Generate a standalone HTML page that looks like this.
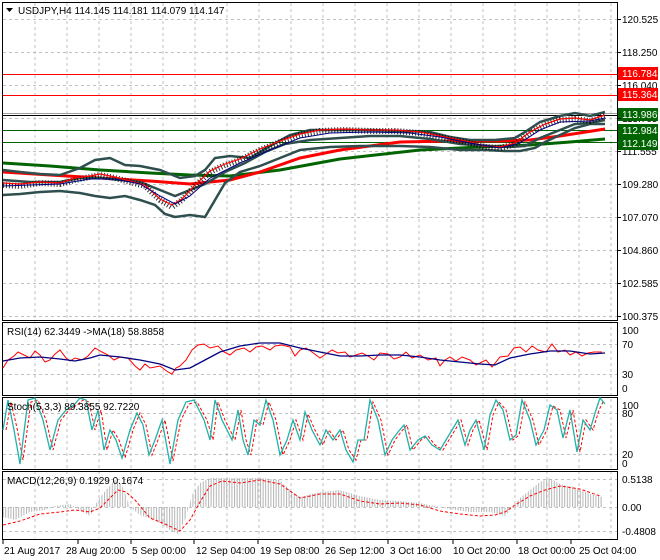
<!DOCTYPE html>
<html><head><meta charset="utf-8"><style>
body{margin:0;background:#fff;}
svg{display:block;font-family:"Liberation Sans",sans-serif;font-size:10px;}
</style></head><body>
<svg width="660" height="560" viewBox="0 0 660 560" xmlns="http://www.w3.org/2000/svg">
<defs>
<pattern id="hist" width="2.6" height="4" patternUnits="userSpaceOnUse"><rect x="0" y="0" width="1" height="4" fill="#b4b4b4"/></pattern>
</defs>
<rect width="660" height="560" fill="#fff"/>
<g stroke="#c0c0c0" stroke-dasharray="3,3" stroke-width="1">
<path d="M35 3V538M67 3V538M99 3V538M131 3V538M163 3V538M195 3V538M227 3V538M259 3V538M291 3V538M323 3V538M355 3V538M387 3V538M419 3V538M451 3V538M483 3V538M515 3V538M547 3V538M579 3V538M611 3V538" />
<path d="M3 19.5H617M3 52.5H617M3 85.5H617M3 118.5H617M3 151.5H617M3 184.5H617M3 217.5H617M3 250.5H617M3 283.5H617M3 316.5H617"/>
<path d="M3 344.5H617M3 374.5H617M3 413.5H617M3 454.5H617M3 479.5H617M3 507.5H617M3 531.5H617"/>
</g>
<g fill="none" stroke="#000" stroke-width="1">
<rect x="2.5" y="2.5" width="615" height="318"/>
<rect x="2.5" y="322.5" width="615" height="73"/>
<rect x="2.5" y="397.5" width="615" height="72"/>
<rect x="2.5" y="471.5" width="615" height="68"/>
</g>
<path d="M3 74.5H617M3 95.5H617" stroke="#ff0000" stroke-width="1"/>
<path d="M3 113.5H617" stroke="#a0a0a0"/>
<path d="M3 115.5H617" stroke="#000"/>
<path d="M3 130.5H617M3 142.5H617" stroke="#006400"/>
<polyline fill="none" stroke="#006400" stroke-width="3" points="3,163 50,166 100,170 150,173 190,175 230,176 280,170 340,159 420,150 480,147 530,145 570,142 605,139"/>
<polyline fill="none" stroke="#ff0000" stroke-width="3" points="3,172 50,175 100,178 150,181 190,184 230,180 260,172 300,158 340,150 400,142 450,141 500,141 530,140 560,136 605,129"/>
<g fill="none" stroke="#2f4f4f" stroke-width="2.5">
<polyline points="3,170 20,172 40,174 60,175 80,168 95,160 110,158 125,165 140,166 160,170 180,178 195,176 205,170 215,158 230,156 250,158 270,146 290,135 310,130 340,130 370,130 400,131 430,132 450,137 470,140 495,140 515,138 525,132 540,122 560,116 575,113 590,116 605,112"/>
<polyline points="3,195 20,194 40,192 60,191 80,193 95,196 110,198 125,196 140,200 155,205 165,214 175,217 190,215 205,217 215,200 225,183 240,172 260,166 280,158 300,150 330,147 360,146 400,146 430,147 460,150 485,150 505,151 520,151 535,148 545,142 560,135 575,128 590,124 605,124"/>
<polyline points="3,180 30,182 60,182 80,178 100,178 120,180 140,182 160,190 175,196 190,190 205,184 225,172 245,163 265,152 285,144 310,140 340,138 370,136 400,136 430,139 460,144 490,146 510,147 525,146 540,138 560,130 575,124 590,123 605,120"/>
</g>
<polyline fill="none" stroke="#000" stroke-width="6" stroke-dasharray="1,2" opacity="0.8" points="3,185 20,186 40,183 60,184 75,180 90,177 100,175 115,178 130,182 145,186 160,200 172,207 182,200 195,186 210,172 225,165 240,160 260,150 280,142 300,135 320,131 345,130 370,131 395,131 420,133 445,138 465,142 485,147 500,148 515,144 530,133 545,125 560,120 575,119 590,121 605,116"/>
<polyline fill="none" stroke="#ff0000" stroke-width="1.2" points="3,183 20,184 40,182 60,183 75,178 90,176 100,174 115,177 130,181 145,185 160,199 172,205 182,199 195,185 210,171 225,164 240,159 260,149 280,141 300,134 320,130 345,129 370,130 395,130 420,132 445,137 465,141 485,146 500,147 515,143 530,132 545,124 560,119 575,118 590,120 605,115"/>
<polyline fill="none" stroke="#000080" stroke-width="1" points="3,186 30,185 60,184 90,179 115,179 140,184 160,196 175,204 190,196 210,178 240,163 270,150 300,138 330,133 370,132 410,133 440,137 470,143 500,148 520,143 540,130 560,122 590,121 605,118"/>
<path d="M6 8h7l-3.5 4z" fill="#000"/>
<text x="18" y="14" fill="#000">USDJPY,H4  114.145 114.181 114.079 114.147</text>
<g fill="#000" stroke="none">
<text x="622" y="23">120.525</text><text x="622" y="56">118.250</text><text x="622" y="89">116.040</text>
<text x="622" y="122">113.765</text><text x="622" y="155">111.555</text><text x="622" y="188">109.280</text>
<text x="622" y="221">107.070</text><text x="622" y="254">104.860</text><text x="622" y="287">102.585</text>
<text x="622" y="320">100.375</text>
</g>
<rect x="618" y="67" width="40" height="13" fill="#ff0000"/><text x="622" y="77" fill="#fff">116.784</text>
<rect x="618" y="88" width="40" height="13" fill="#ff0000"/><text x="622" y="98" fill="#fff">115.364</text>
<rect x="618" y="108" width="40" height="13" fill="#006400"/><text x="622" y="118" fill="#fff">113.986</text>
<rect x="618" y="124" width="40" height="13" fill="#006400"/><text x="622" y="134" fill="#fff">112.984</text>
<rect x="618" y="137" width="40" height="13" fill="#006400"/><text x="622" y="147" fill="#fff">112.149</text>
<polyline fill="none" stroke="#ff0000" stroke-width="1" points="3,368 8,360 14,356 18,352 24,355 30,358 35,351 40,355 45,362 50,360 55,354 60,350 66,358 70,361 75,358 82,360 88,356 95,348 102,352 108,355 114,360 120,357 128,358 135,366 140,370 145,364 150,368 160,366 168,372 172,374 176,368 180,366 186,360 192,350 198,345 204,344 210,348 218,346 224,352 230,355 236,350 244,348 250,352 256,347 262,346 270,350 275,346 282,345 290,347 295,356 300,350 306,348 312,352 320,358 326,354 332,350 338,353 345,352 350,357 356,355 362,353 368,356 374,360 380,353 388,354 394,359 400,357 406,352 412,358 420,355 428,360 436,358 440,366 445,360 450,357 456,361 462,357 470,360 476,365 480,363 486,360 492,367 500,357 508,356 514,348 520,347 526,352 532,346 538,350 546,352 552,344 558,352 565,350 570,355 576,352 582,356 588,353 594,352 602,352"/>
<polyline fill="none" stroke="#000080" stroke-width="1.3" points="3,361 20,358 40,357 60,359 75,361 90,358 100,355 120,357 140,360 160,364 175,370 190,368 205,360 220,352 240,346 260,343 280,343 300,348 320,352 340,356 360,356 380,355 400,355 420,357 440,360 460,362 480,364 495,365 510,358 530,354 550,351 570,351 590,354 605,353"/>
<text x="7" y="335" fill="#000">RSI(14) 62.3449  -&gt;MA(18) 58.8858</text>
<text x="622" y="334">100</text><text x="622" y="348">70</text><text x="622" y="378">30</text><text x="622" y="392">0</text>
<polyline fill="none" stroke="#ff0000" stroke-width="1" stroke-dasharray="3,2" points="6,430 11,402 17,428 23,460 31,402 38,400 46,420 53,450 61,420 69,410 77,405 83,400 89,402 95,430 101,410 107,450 113,430 119,440 125,458 133,430 140,413 146,425 152,455 158,440 165,420 173,461 181,420 189,404 197,402 207,420 213,440 218,402 225,420 235,440 241,410 246,440 251,455 257,420 263,425 269,402 276,420 283,455 290,440 296,420 303,440 308,414 315,430 323,445 329,430 336,440 343,430 349,450 356,460 361,440 367,440 373,402 381,420 388,455 395,440 401,432 407,425 413,450 421,440 428,436 435,445 443,450 449,440 455,430 461,420 468,445 473,430 479,420 487,450 493,415 499,402 506,410 513,440 519,435 525,402 533,420 539,445 547,430 553,406 560,410 566,438 573,410 580,452 586,420 593,430 599,410 603,402"/>
<polyline fill="none" stroke="#20b2aa" stroke-width="1.3" points="3,430 8,400 14,430 20,464 28,400 35,398 43,420 50,450 58,420 66,410 74,405 80,398 86,400 92,430 98,410 104,450 110,430 116,440 122,458 130,430 137,413 143,425 149,455 155,440 162,420 170,464 178,420 186,402 194,400 204,420 210,440 215,400 222,420 232,440 238,410 243,440 248,455 254,420 260,425 266,400 273,420 280,455 287,440 293,420 300,440 305,412 312,430 320,445 326,430 333,440 340,430 346,450 353,462 358,440 364,440 370,400 378,420 385,455 392,440 398,432 404,425 410,450 418,440 425,436 432,445 440,450 446,440 452,430 458,420 465,445 470,430 476,420 484,450 490,415 496,400 503,410 510,440 516,435 522,400 530,420 536,445 544,430 550,405 557,410 563,438 570,410 577,452 583,420 590,430 596,410 600,398 605,404"/>
<text x="7" y="410" fill="#000">Stoch(5,3,3) 89.3855 92.7220</text>
<text x="622" y="409">100</text><text x="622" y="417">80</text><text x="622" y="458">20</text><text x="622" y="467">0</text>
<polygon fill="url(#hist)" points="3,507 3,517 15,520 30,512 45,510 55,506 70,504 80,510 90,516 98,500 106,490 115,480 122,485 130,507 140,515 155,520 170,530 178,534 185,520 192,495 200,483 210,478 240,478 260,478 280,480 290,490 300,497 320,492 340,490 360,496 380,500 400,501 420,503 435,506 450,509 470,512 490,512 505,516 512,508 520,498 530,490 540,482 550,478 560,484 575,488 590,494 602,497 602,507"/>
<polyline fill="none" stroke="#ff0000" stroke-width="1" stroke-dasharray="3,2" points="3,525 20,521 40,514 60,512 75,510 90,512 100,508 110,498 118,490 126,492 135,500 150,518 165,524 180,531 190,520 200,502 210,486 222,481 240,483 260,480 280,484 300,498 320,494 340,494 360,501 380,504 400,503 420,505 440,511 460,514 480,516 495,515 505,512 515,505 530,496 545,490 560,486 580,489 600,496"/>
<text x="7" y="484" fill="#000">MACD(12,26,9) 0.1929 0.1674</text>
<text x="622" y="483">0.5138</text><text x="622" y="511">0.00</text><text x="622" y="535">-0.4808</text>
<g stroke="#000"><path d="M617 19.5h4M617 52.5h4M617 85.5h4M617 118.5h4M617 151.5h4M617 184.5h4M617 217.5h4M617 250.5h4M617 283.5h4M617 316.5h4"/>
<path d="M3 540v4M78 540v4M131 540v4M194 540v4M258 540v4M323 540v4M388 540v4M453 540v4M517 540v4M571 540v4"/></g>
<g fill="#000">
<text x="4" y="554">21 Aug 2017</text><text x="66" y="554">28 Aug 20:00</text><text x="132" y="554">5 Sep 00:00</text>
<text x="196" y="554">12 Sep 04:00</text><text x="260" y="554">19 Sep 08:00</text><text x="325" y="554">26 Sep 12:00</text>
<text x="390" y="554">3 Oct 16:00</text><text x="453" y="554">10 Oct 20:00</text><text x="518" y="554">18 Oct 00:00</text>
<text x="579" y="554">25 Oct 04:00</text>
</g>
</svg>
</body></html>
